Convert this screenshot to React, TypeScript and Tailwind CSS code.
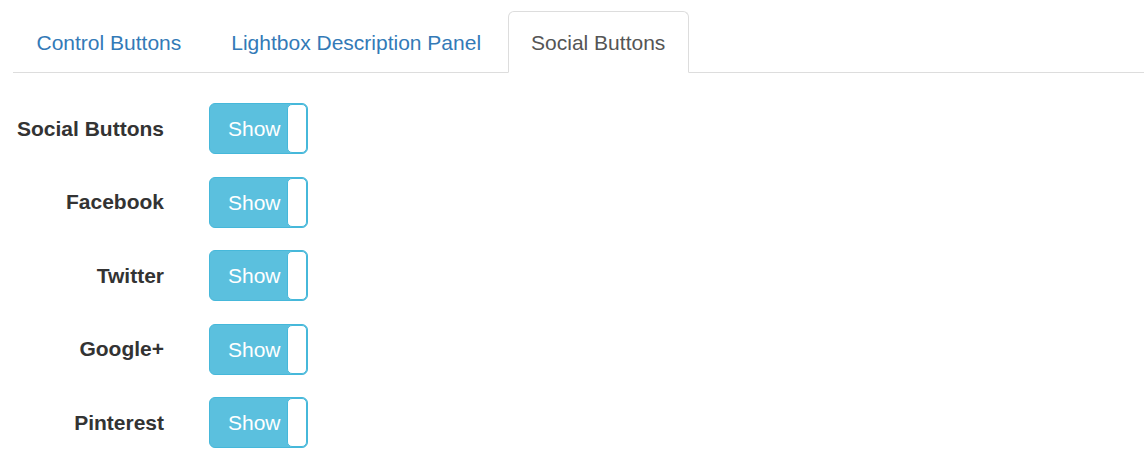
import React from 'react';

const tabs = [
  { label: 'Control Buttons', active: false },
  { label: 'Lightbox Description Panel', active: false },
  { label: 'Social Buttons', active: true },
];

const rows = ['Social Buttons', 'Facebook', 'Twitter', 'Google+', 'Pinterest'];

const Toggle: React.FC = () => (
  <div className="relative flex h-[51px] w-[99px] items-center overflow-hidden rounded-[6px] border border-[#46b8da] bg-[#5bc0de]">
    <span className="pl-[18px] text-[21px] leading-none text-white">Show</span>
    <div className="absolute right-0 top-0 h-full w-[20px] rounded-[5px] border border-[#46b8da] bg-white"></div>
  </div>
);

export default function App() {
  return (
    <div className="h-[462px] w-[1144px] bg-white font-['Liberation_Sans',Arial,sans-serif]">
      {/* tabs */}
      <div className="ml-[13px] flex border-b border-[#dddddd] pt-[11px]">
        {tabs.map((t) => (
          <div
            key={t.label}
            className={
              t.active
                ? 'mr-[3px] -mb-px rounded-t-[6px] border border-[#dddddd] border-b-white bg-white px-[22.5px] pt-[16px] pb-[13px] text-[21px] leading-[30px] text-[#555555]'
                : 'mr-[3px] border border-transparent px-[22.5px] pt-[16px] pb-[13px] text-[21px] leading-[30px] text-[#337ab7]'
            }
          >
            {t.label}
          </div>
        ))}
      </div>

      {/* form */}
      <div className="mt-[30px] flex flex-col gap-[22.5px]">
        {rows.map((r) => (
          <div key={r} className="flex items-center">
            <div className="w-[164px] text-right text-[21px] font-bold text-[#333333]">{r}</div>
            <div className="ml-[45px]">
              <Toggle />
            </div>
          </div>
        ))}
      </div>
    </div>
  );
}
